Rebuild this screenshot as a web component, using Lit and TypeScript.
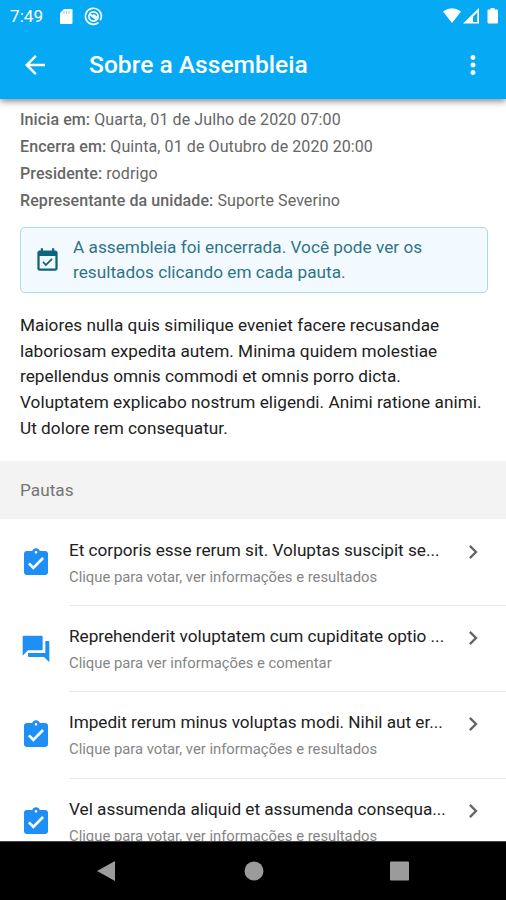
import { LitElement, html, css, svg } from "lit";
import { customElement } from "lit/decorators.js";

interface Topic {
  kind: "vote" | "talk";
  title: string;
  hint: string;
}

const VOTE_HINT = "Clique para votar, ver informações e resultados";
const TALK_HINT = "Clique para ver informações e comentar";

const TOPICS: Topic[] = [
  { kind: "vote", title: "Et corporis esse rerum sit. Voluptas suscipit se...", hint: VOTE_HINT },
  { kind: "talk", title: "Reprehenderit voluptatem cum cupiditate optio ...", hint: TALK_HINT },
  { kind: "vote", title: "Impedit rerum minus voluptas modi. Nihil aut er...", hint: VOTE_HINT },
  { kind: "vote", title: "Vel assumenda aliquid et assumenda consequa...", hint: VOTE_HINT },
];

const DETAILS = [
  ["Inicia em:", "Quarta, 01 de Julho de 2020 07:00"],
  ["Encerra em:", "Quinta, 01 de Outubro de 2020 20:00"],
  ["Presidente:", "rodrigo"],
  ["Representante da unidade:", "Suporte Severino"],
];

const DESCRIPTION = [
  "Maiores nulla quis similique eveniet facere recusandae",
  "laboriosam expedita autem. Minima quidem molestiae",
  "repellendus omnis commodi et omnis porro dicta.",
  "Voluptatem explicabo nostrum eligendi. Animi ratione animi.",
  "Ut dolore rem consequatur.",
];

const ICONS = {
  vote: svg`<path d="M19 3h-4.18C14.4 1.84 13.3 1 12 1s-2.400.84-2.820 2H5c-1.100 0-2 .9-2 2v14c0 1.100.9 2 2 2h14c1.100 0 2-.9 2-2V5c0-1.100-.9-2-2-2zm-7 0c.55 0 1 .45 1 1s-.45 1-1 1-1-.45-1-1 .45-1 1-1zm-2 14l-4-4 1.410-1.410L10 14.170l6.590-6.590L18 9l-8 8z"/>`,
  talk: svg`<path d="M21 6h-2v9H6v2c0 .55.45 1 1 1h11l4 4V7c0-.55-.45-1-1-1zm-4 6V3c0-.55-.45-1-1-1H3c-.55 0-1 .45-1 1v14l4-4h10c.55 0 1-.45 1-1z"/>`,
  back: svg`<path d="M20 11H7.830l5.590-5.590L12 4l-8 8 8 8 1.410-1.410L7.830 13H20v-2z"/>`,
  more: svg`<path d="M12 8c1.100 0 2-.9 2-2s-.9-2-2-2-2 .9-2 2 .9 2 2 2zm0 2c-1.100 0-2 .9-2 2s.9 2 2 2 2-.9 2-2-.9-2-2-2zm0 6c-1.100 0-2 .9-2 2s.9 2 2 2 2-.9 2-2-.9-2-2-2z"/>`,
  next: svg`<path d="M8.590 16.590L13.170 12 8.590 7.410 10 6l6 6-6 6z"/>`,
  event: svg`<path d="M16.530 11.060L15.470 10l-4.880 4.880-2.120-2.120-1.060 1.060L10.590 17l5.940-5.940zM19 3h-1V1h-2v2H8V1H6v2H5c-1.110 0-1.990.9-1.990 2L3 19c0 1.100.89 2 2 2h14c1.100 0 2-.9 2-2V5c0-1.100-.9-2-2-2zm0 16H5V8h14v11z"/>`,
};

@customElement("app-root")
export class AppRoot extends LitElement {
  static styles = css`
    :host {
      display: flex;
      flex-direction: column;
      width: 506px;
      height: 900px;
      overflow: hidden;
      background: #fff;
      font-family: Roboto, sans-serif;
      color: #212121;
    }
    svg { display: block; flex: none; fill: currentColor; }
    .top {
      flex: none;
      height: 99px;
      background: #05a9f4;
      color: #fff;
      box-shadow: 0 2px 7px rgba(0, 0, 0, 0.5);
      z-index: 1;
    }
    .status {
      display: flex;
      height: 30px;
      padding: 2px 7px 0 10px;
      box-sizing: border-box;
      align-items: center;
    }
    .clock { width: 49px; font-size: 17.2px; }
    .sd { margin-right: 11px; }
    .push { margin-left: auto; }
    .bar {
      display: flex;
      height: 69px;
      align-items: center;
      padding: 0 18px 0 20px;
    }
    .bar h1 {
      flex: 1;
      margin: 0 0 0 39px;
      font-size: 24.6px;
      font-weight: 500;
      line-height: 30px;
      white-space: nowrap;
    }
    .content { flex: 1; min-height: 0; overflow: hidden; white-space: nowrap; }
    .details {
      padding: 7px 20px 0;
      color: #666;
      font-size: 16px;
      line-height: 27px;
      letter-spacing: 0.09px;
    }
    .details b { font-weight: 500; }
    .notice {
      display: flex;
      align-items: center;
      box-sizing: border-box;
      height: 66px;
      margin: 13px 18px 0 20px;
      padding-left: 13px;
      gap: 12px;
      border: 1px solid #a9dbe2;
      border-radius: 5px;
      background: #f3faff;
      color: #2f7488;
      font-size: 17.2px;
      line-height: 25.5px;
      letter-spacing: 0.02px;
    }
    .notice svg { color: #0f647d; }
    .description {
      padding: 20px 20px 0;
      height: 148px;
      font-size: 17.2px;
      line-height: 25.7px;
      letter-spacing: 0.03px;
    }
    .section {
      height: 58px;
      padding-left: 20px;
      background: #f3f3f3;
      color: #757575;
      font-size: 17.2px;
      line-height: 58px;
      letter-spacing: 0.03px;
    }
    .row { display: flex; height: 86.2px; padding-left: 20px; }
    .row > svg { margin: 28px 17px 0 0; color: #1e8ff5; }
    .body {
      flex: 1;
      display: flex;
      justify-content: space-between;
      box-sizing: border-box;
      padding: 17px 19px 0 0;
      border-top: 1px solid #e8e8e8;
    }
    .row:first-child .body { border-color: transparent; }
    .title { font-size: 17.2px; line-height: 27px; letter-spacing: -0.02px; }
    .hint { font-size: 14.8px; line-height: 27px; color: #858585; }
    .body svg { margin-top: 1px; color: #666; }
    .nav {
      flex: none;
      display: flex;
      justify-content: space-between;
      align-items: center;
      box-sizing: border-box;
      height: 59px;
      padding: 0 96px 0 97px;
      border-top: 1px solid #444;
      background: #000;
      color: #9b9b9b;
    }
  `;

  private icon(name: keyof typeof ICONS, size: number) {
    return html`<svg width=${size} height=${size} viewBox="0 0 24 24">${ICONS[name]}</svg>`;
  }

  render() {
    return html`
      <header class="top">
        <div class="status">
          <span class="clock">7:49</span>
          <svg class="sd" width="14" height="17" viewBox="0 0 14 17">
            <path d="M5 1h7.500Q13.500 1 13.500 2v13q0 1-1 1H2q-1 0-1-1V5z" />
            <path d="M5 3v3M7.500 3v3M10 3v3" stroke="#7ccff8" stroke-width="1" />
          </svg>
          <svg width="19" height="19" viewBox="0 0 19 19">
            <g fill="none" stroke="#fff" stroke-width="1.700">
              <path d="M14.500 15.500A8 8 0 1 1 17.400 8.500Q17.600 11.500 16 13.200" />
              <circle cx="9.500" cy="9.500" r="4.600" />
              <path d="M6 7.500l6.500 5M9 7.500l4 3" />
            </g>
          </svg>
          <svg class="push" width="57" height="18" viewBox="0 0 57 18">
            <path d="M1 4.500Q10 -2 19 4.500L10 16z" />
            <path fill-rule="evenodd" d="M37 1v15.500H21zM35.300 5.300L31 9.700v5.200h4.300z" />
            <path d="M48.500 1h4v1.500H55q1 0 1 1v12q0 1-1 1h-8.500q-1 0-1-1v-12q0-1 1-1h2z" />
          </svg>
        </div>
        <div class="bar">
          ${this.icon("back", 30)}
          <h1>Sobre a Assembleia</h1>
          ${this.icon("more", 30)}
        </div>
      </header>
      <main class="content">
        <div class="details">
          ${DETAILS.map(([label, value]) => html`<div><b>${label}</b> ${value}</div>`)}
        </div>
        <div class="notice">
          ${this.icon("event", 27)}
          <div>
            <div>A assembleia foi encerrada. Você pode ver os</div>
            <div>resultados clicando em cada pauta.</div>
          </div>
        </div>
        <div class="description">${DESCRIPTION.map((line) => html`<div>${line}</div>`)}</div>
        <div class="section">Pautas</div>
        <div>
          ${TOPICS.map(
            (t) => html`<div class="row">
              ${this.icon(t.kind, 32)}
              <div class="body">
                <div>
                  <div class="title">${t.title}</div>
                  <div class="hint">${t.hint}</div>
                </div>
                ${this.icon("next", 28)}
              </div>
            </div>`
          )}
        </div>
      </main>
      <footer class="nav">
        <svg width="20" height="22" viewBox="0 0 20 22"><path d="M18 1v20L0 11z" /></svg>
        <svg width="20" height="20" viewBox="0 0 20 20"><circle cx="10" cy="10" r="9.500" /></svg>
        <svg width="20" height="20" viewBox="0 0 20 20"><rect x="0" y=".5" width="19" height="19" rx="1" /></svg>
      </footer>
    `;
  }
}
